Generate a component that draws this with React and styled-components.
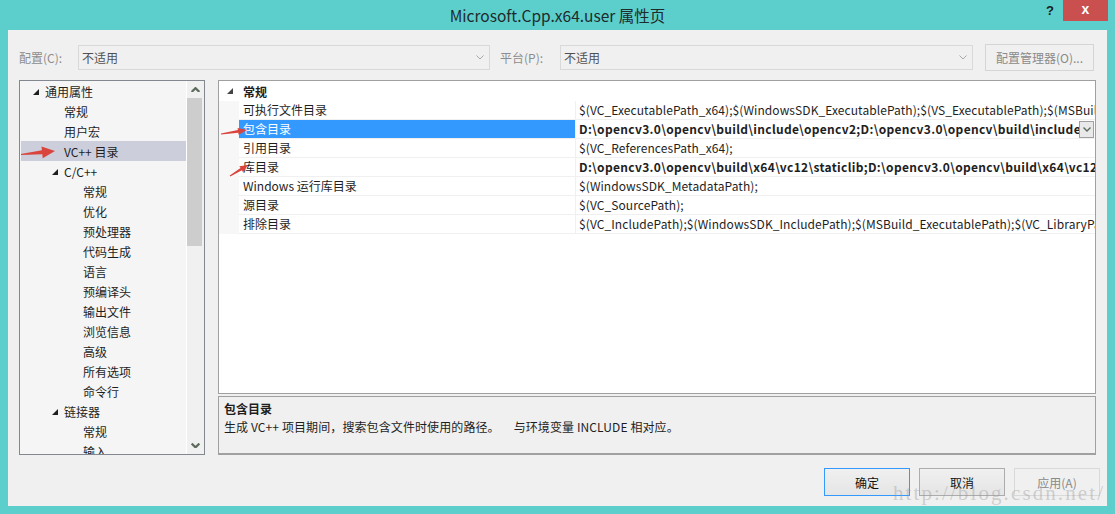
import React from 'react';
import styled, { createGlobalStyle } from 'styled-components';

const GlobalStyle = createGlobalStyle`
  html, body {
    margin: 0;
    padding: 0;
  }
  body {
    font-family: "Noto Sans CJK SC", "Noto Sans", "Liberation Sans", sans-serif;
    font-size: 12px;
    color: #1e1e1e;
  }
`;

const treeItems = [
  { label: '通用属性', level: 0, open: true },
  { label: '常规', level: 1 },
  { label: '用户宏', level: 1 },
  { label: 'VC++ 目录', level: 1, selected: true },
  { label: 'C/C++', level: 1, open: true },
  { label: '常规', level: 2 },
  { label: '优化', level: 2 },
  { label: '预处理器', level: 2 },
  { label: '代码生成', level: 2 },
  { label: '语言', level: 2 },
  { label: '预编译头', level: 2 },
  { label: '输出文件', level: 2 },
  { label: '浏览信息', level: 2 },
  { label: '高级', level: 2 },
  { label: '所有选项', level: 2 },
  { label: '命令行', level: 2 },
  { label: '链接器', level: 1, open: true },
  { label: '常规', level: 2 },
  { label: '输入', level: 2 },
];

const props = [
  { name: '可执行文件目录', value: '$(VC_ExecutablePath_x64);$(WindowsSDK_ExecutablePath);$(VS_ExecutablePath);$(MSBuild_ExecutablePath);$(SystemRoot)' },
  { name: '包含目录', value: 'D:\\opencv3.0\\opencv\\build\\include\\opencv2;D:\\opencv3.0\\opencv\\build\\include\\opencv;$(IncludePath)', bold: true, selected: true },
  { name: '引用目录', value: '$(VC_ReferencesPath_x64);' },
  { name: '库目录', value: 'D:\\opencv3.0\\opencv\\build\\x64\\vc12\\staticlib;D:\\opencv3.0\\opencv\\build\\x64\\vc12\\lib;$(LibraryPath)', bold: true },
  { name: 'Windows 运行库目录', value: '$(WindowsSDK_MetadataPath);' },
  { name: '源目录', value: '$(VC_SourcePath);' },
  { name: '排除目录', value: '$(VC_IncludePath);$(WindowsSDK_IncludePath);$(MSBuild_ExecutablePath);$(VC_LibraryPath_x64);' },
];

// arrow polygon from tail to tip
const arrowPoints = (x1, y1, x2, y2, headLen, headW, tailW, neckW) => {
  const dx = x2 - x1;
  const dy = y2 - y1;
  const len = Math.hypot(dx, dy);
  const ux = dx / len;
  const uy = dy / len;
  const nx = -uy;
  const ny = ux;
  const bx = x2 - ux * headLen;
  const by = y2 - uy * headLen;
  const p = (x, y) => `${x.toFixed(1)},${y.toFixed(1)}`;
  return [
    p(x1 + nx * tailW, y1 + ny * tailW),
    p(bx + nx * neckW, by + ny * neckW),
    p(bx + nx * headW, by + ny * headW),
    p(x2, y2),
    p(bx - nx * headW, by - ny * headW),
    p(bx - nx * neckW, by - ny * neckW),
    p(x1 - nx * tailW, y1 - ny * tailW),
  ].join(' ');
};

const Chevron = ({ dir = 'down', color = '#a8a8a8', w = 8, sw = 1 }) => (
  <svg width={w} height={w / 2 + 1} viewBox="0 0 8 5">
    <polyline
      points={dir === 'down' ? '0.5,0.5 4,4 7.5,0.5' : '0.5,4.5 4,1 7.5,4.5'}
      fill="none"
      stroke={color}
      strokeWidth={sw}
    />
  </svg>
);

const Expander = ({ color = '#1e1e1e' }) => (
  <svg width="6" height="6" viewBox="0 0 6 6">
    <polygon points="6,0 6,6 0,6" fill={color} />
  </svg>
);

const App = () => {
  return (
    <>
      <GlobalStyle />
      <Window>
        <TitleBar>
          <span />
          <Title>Microsoft.Cpp.x64.user 属性页</Title>
          <Controls>
            <Help>?</Help>
            <CloseButton>x</CloseButton>
          </Controls>
        </TitleBar>

        <Client>
          <TopRow>
            <FieldLabel width={59}>配置(C):</FieldLabel>
            <Combo width={412}>
              <span>不适用</span>
              <Chevron />
            </Combo>
            <FieldLabel width={60} style={{ marginLeft: 10 }}>平台(P):</FieldLabel>
            <Combo width={413}>
              <span>不适用</span>
              <Chevron />
            </Combo>
            <ManagerButton>配置管理器(O)...</ManagerButton>
          </TopRow>

          <Main>
            <Tree>
              <TreeList>
                {treeItems.map((item, i) => (
                  <TreeRow key={i} level={item.level} selected={item.selected}>
                    <ExpanderSlot>{item.open && <Expander />}</ExpanderSlot>
                    <span>{item.label}</span>
                  </TreeRow>
                ))}
              </TreeList>
              <ScrollBar>
                <ScrollArrow>
                  <Chevron dir="up" color="#5d6b5d" w={9} sw={2} />
                </ScrollArrow>
                <Thumb />
                <ScrollSpace />
                <ScrollArrow>
                  <Chevron dir="down" color="#5d6b5d" w={9} sw={2} />
                </ScrollArrow>
              </ScrollBar>
            </Tree>

            <RightColumn>
              <Grid>
                <CategoryRow>
                  <GutterSlot>
                    <Expander color="#444" />
                  </GutterSlot>
                  <CategoryName>常规</CategoryName>
                </CategoryRow>
                {props.map((p, i) => (
                  <PropRow key={i}>
                    <Gutter />
                    <NameCell selected={p.selected}>{p.name}</NameCell>
                    <ValueCell bold={p.bold}>
                      <ValueText>{p.value}</ValueText>
                      {p.selected && (
                        <DropButton>
                          <Chevron color="#5d6b5d" w={8} sw={1.4} />
                        </DropButton>
                      )}
                    </ValueCell>
                  </PropRow>
                ))}
              </Grid>
              <Description>
                <DescTitle>包含目录</DescTitle>
                <DescText>生成 VC++ 项目期间，搜索包含文件时使用的路径。&nbsp;&nbsp;&nbsp;&nbsp;&nbsp;与环境变量 INCLUDE 相对应。</DescText>
              </Description>
            </RightColumn>
          </Main>

          <ButtonRow>
            <DialogButton kind="default">确定</DialogButton>
            <DialogButton>取消</DialogButton>
            <DialogButton kind="disabled">应用(A)</DialogButton>
          </ButtonRow>
        </Client>

        <Annotations width="1115" height="514">
          <polygon points={arrowPoints(21, 154.5, 55, 151, 13, 6, 0.6, 2)} fill="#d9453d" />
          <polygon points={arrowPoints(221, 134, 247, 130, 9, 3.5, 0.5, 1.3)} fill="#d9453d" />
          <polygon points={arrowPoints(230, 176, 248, 165, 8, 3.5, 0.5, 1.3)} fill="#d9453d" />
        </Annotations>
        <Watermark>http://blog.csdn.net/</Watermark>
      </Window>
    </>
  );
};

export default App;

const Window = styled.div`
  position: relative;
  width: 1115px;
  height: 514px;
  box-sizing: border-box;
  padding: 0 8px 8px 8px;
  background: #5ccfcd;
  display: flex;
  flex-direction: column;
  overflow: hidden;
`;

const TitleBar = styled.div`
  height: 30px;
  display: grid;
  grid-template-columns: 1fr auto 1fr;
  align-items: start;
`;

const Title = styled.div`
  font-size: 15.5px;
  line-height: 30px;
  color: #1f2a2a;
`;

const Controls = styled.div`
  display: flex;
  justify-content: flex-end;
  align-items: center;
  margin-right: -1px;
`;

const Help = styled.div`
  font-family: "Liberation Sans", sans-serif;
  font-weight: bold;
  font-size: 13px;
  color: #1a1a1a;
  width: 17px;
  line-height: 21px;
`;

const CloseButton = styled.div`
  width: 45px;
  height: 21px;
  background: #c9504f;
  color: #fff;
  font-family: "Liberation Sans", sans-serif;
  font-weight: bold;
  font-size: 14px;
  line-height: 19px;
  text-align: center;
`;

const Client = styled.div`
  flex: 1;
  background: #f0f0f0;
  display: flex;
  flex-direction: column;
  padding: 14px 7px 11px 11px;
  min-height: 0;
`;

const TopRow = styled.div`
  height: 27px;
  display: flex;
  align-items: center;
`;

const FieldLabel = styled.div`
  width: ${(p) => p.width}px;
  color: #8d8d8d;
  flex-shrink: 0;
`;

const Combo = styled.div`
  width: ${(p) => p.width}px;
  height: 25px;
  box-sizing: border-box;
  border: 1px solid #d9d9d9;
  background: #f0f0f0;
  display: flex;
  align-items: center;
  justify-content: space-between;
  padding: 0 5px 0 3px;
  color: #505050;
  flex-shrink: 0;
`;

const ManagerButton = styled.div`
  margin-left: 12px;
  width: 109px;
  height: 27px;
  box-sizing: border-box;
  border: 1px solid #d5d5d5;
  display: flex;
  align-items: center;
  justify-content: center;
  color: #8a8a8a;
`;

const Main = styled.div`
  margin-top: 9px;
  height: 375px;
  display: flex;
  gap: 13px;
`;

const Tree = styled.div`
  width: 186px;
  box-sizing: border-box;
  border: 1px solid #828790;
  background: #f5f5f5;
  display: flex;
  overflow: hidden;
`;

const TreeList = styled.div`
  flex: 1;
  overflow: hidden;
`;

const TreeRow = styled.div`
  height: 20px;
  display: flex;
  align-items: center;
  margin-left: 1px;
  padding-left: ${(p) => 12 + p.level * 19}px;
  background: ${(p) => (p.selected ? '#cccedb' : 'transparent')};
  white-space: nowrap;
`;

const ExpanderSlot = styled.span`
  width: 12px;
  display: flex;
  align-items: center;
  padding-top: 1px;
`;

const ScrollBar = styled.div`
  width: 17px;
  border-left: 1px solid #ffffff;
  background: #f0f0f0;
  display: flex;
  flex-direction: column;
  align-items: flex-start;
`;

const ScrollArrow = styled.div`
  height: 17px;
  width: 16px;
  display: flex;
  align-items: center;
  justify-content: center;
`;

const Thumb = styled.div`
  width: 15px;
  height: 148px;
  background: #cdcdcd;
`;

const ScrollSpace = styled.div`
  flex: 1;
`;

const RightColumn = styled.div`
  flex: 1;
  margin-right: 4px;
  display: flex;
  flex-direction: column;
  gap: 2px;
  min-width: 0;
`;

const Grid = styled.div`
  height: 314px;
  box-sizing: border-box;
  border: 1px solid #a0a0a0;
  background: #ffffff;
  overflow: hidden;
`;

const CategoryRow = styled.div`
  height: 20px;
  display: flex;
  align-items: center;
`;

const GutterSlot = styled.div`
  width: 20px;
  display: flex;
  justify-content: center;
  padding-left: 2px;
  box-sizing: border-box;
`;

const CategoryName = styled.div`
  font-weight: bold;
  padding-left: 4px;
`;

const PropRow = styled.div`
  height: 19px;
  display: flex;
`;

const Gutter = styled.div`
  width: 20px;
  flex-shrink: 0;
  background: #f7f7f7;
`;

const NameCell = styled.div`
  width: 337px;
  flex-shrink: 0;
  box-sizing: border-box;
  padding-left: 4px;
  line-height: 18px;
  border-right: 1px solid #f0f0f0;
  border-bottom: 1px solid #f0f0f0;
  background: ${(p) => (p.selected ? '#3399ff' : '#ffffff')};
  color: ${(p) => (p.selected ? '#ffffff' : '#1e1e1e')};
  white-space: nowrap;
`;

const ValueCell = styled.div`
  flex: 1;
  min-width: 0;
  display: flex;
  align-items: center;
  padding-left: 3px;
  border-bottom: 1px solid #f0f0f0;
  font-weight: ${(p) => (p.bold ? 'bold' : 'normal')};
  letter-spacing: ${(p) => (p.bold ? '0.32px' : '0.08px')};
`;

const ValueText = styled.div`
  flex: 1;
  overflow: hidden;
  white-space: nowrap;
  line-height: 18px;
`;

const DropButton = styled.div`
  width: 15px;
  height: 17px;
  box-sizing: border-box;
  margin-right: 1px;
  border: 1px solid #a0a0a0;
  background: #e9e9e9;
  display: flex;
  align-items: center;
  justify-content: center;
  flex-shrink: 0;
`;

const Description = styled.div`
  flex: 1;
  box-sizing: border-box;
  border: 1px solid #a0a0a0;
  border-bottom-width: 2px;
  background: #f0f0f0;
  padding: 3px 5px;
`;

const DescTitle = styled.div`
  font-weight: bold;
  line-height: 18px;
`;

const DescText = styled.div`
  line-height: 18px;
  letter-spacing: 0.1px;
`;

const ButtonRow = styled.div`
  margin-top: 13px;
  display: flex;
  justify-content: flex-end;
  gap: 9px;
`;

const DialogButton = styled.div`
  width: 86px;
  height: 28px;
  box-sizing: border-box;
  border: 1px solid
    ${(p) => (p.kind === 'default' ? '#3399ff' : p.kind === 'disabled' ? '#d9d9d9' : '#acacac')};
  background: ${(p) =>
    p.kind === 'disabled' ? '#f0f0f0' : 'linear-gradient(#f0f0f0, #e5e5e5)'};
  color: ${(p) => (p.kind === 'disabled' ? '#8a8a8a' : '#111')};
  display: flex;
  align-items: center;
  justify-content: center;
`;

const Annotations = styled.svg`
  position: absolute;
  left: 0;
  top: 0;
  pointer-events: none;
`;

const Watermark = styled.div`
  position: absolute;
  left: 893px;
  top: 481px;
  font-family: "Liberation Serif", serif;
  font-size: 21px;
  letter-spacing: 2.1px;
  color: rgba(150, 150, 150, 0.4);
  pointer-events: none;
`;
